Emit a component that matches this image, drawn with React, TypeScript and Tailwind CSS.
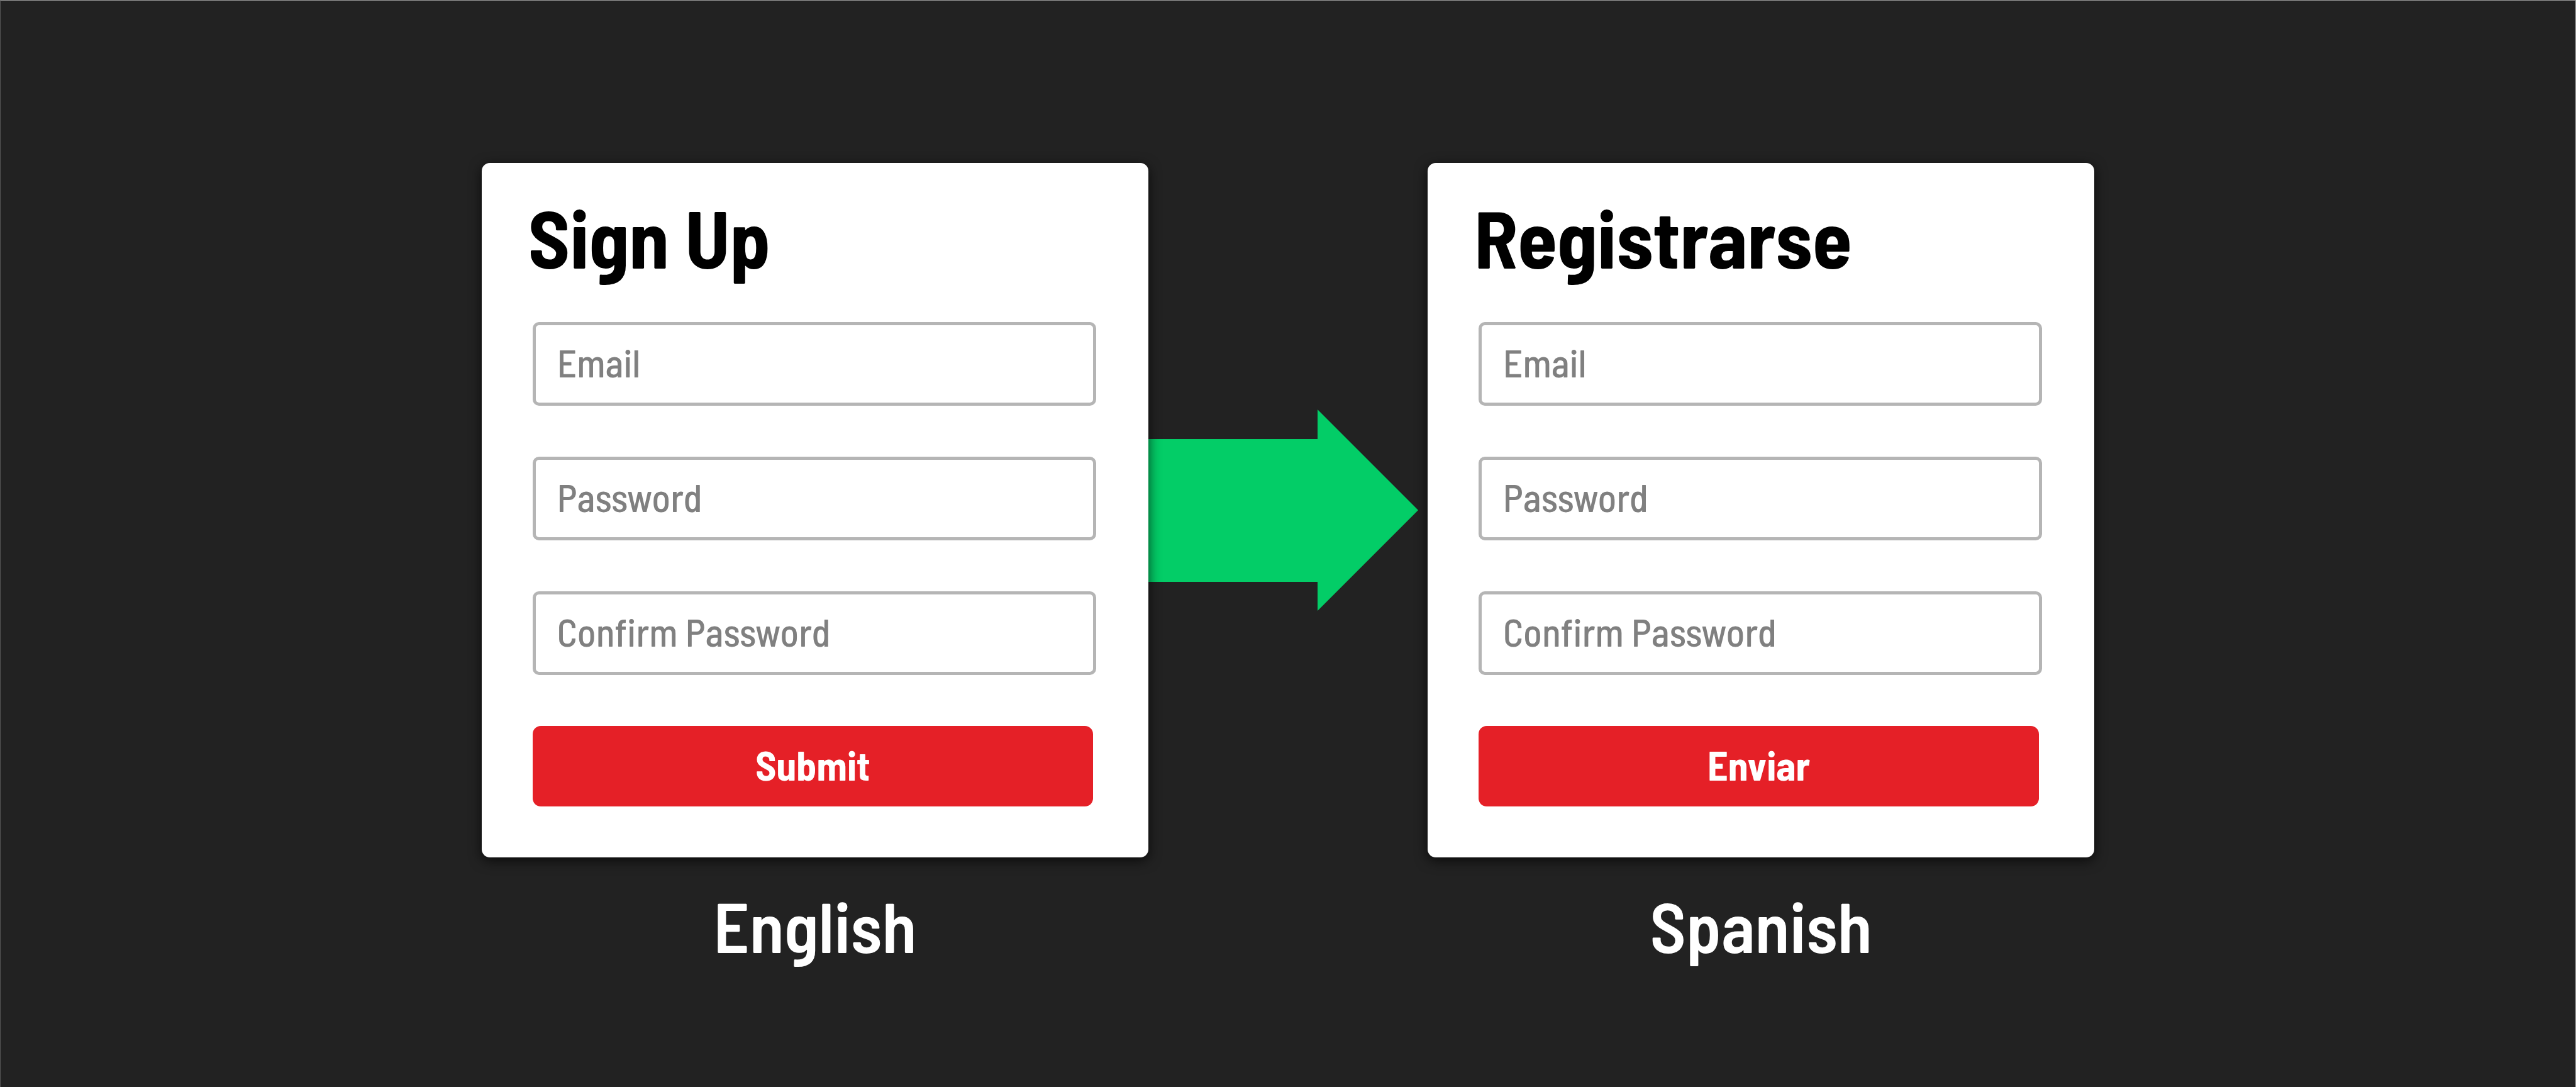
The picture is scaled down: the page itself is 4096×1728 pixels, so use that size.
type FormCopy = {
  id: string;
  lang: string;
  title: string;
  submit: string;
};

const english: FormCopy = { id: 'en', lang: 'en', title: 'Sign Up', submit: 'Submit' };
const spanish: FormCopy = { id: 'es', lang: 'es', title: 'Registrarse', submit: 'Enviar' };

const fields = [
  { name: 'email', type: 'email', label: 'Email' },
  { name: 'password', type: 'password', label: 'Password' },
  { name: 'confirm', type: 'password', label: 'Confirm Password' },
];

function SignUpCard({ id, lang, title, submit }: FormCopy) {
  return (
    <section
      lang={lang}
      aria-labelledby={`${id}-title`}
      className="relative z-10 rounded-[13px] bg-white pt-[53px] pb-[81px] shadow-[0_5px_20px_rgba(0,0,0,0.7)]"
    >
      <h2 id={`${id}-title`} className="px-[74px] text-[128px] leading-[128px] font-bold text-black">
        {title}
      </h2>
      <form className="mt-[72px] flex flex-col gap-[81px] pr-[83px] pl-[81px]" onSubmit={(e) => e.preventDefault()}>
        {fields.map((field) => (
          <input
            key={field.name}
            id={`${id}-${field.name}`}
            name={field.name}
            type={field.type}
            aria-label={field.label}
            placeholder={field.label}
            className="h-[133px] w-full rounded-[10px] border-[5px] border-[#b5b5b5] bg-white pr-8 pb-[6px] pl-[34px] text-[61px] font-medium text-[#808080] placeholder:text-[#808080] placeholder:opacity-100"
          />
        ))}
        <button
          type="submit"
          className="mr-[5px] flex h-32 items-center justify-center rounded-[13px] bg-[#e52027] pb-1 text-[64px] leading-[64px] font-bold text-white"
        >
          {submit}
        </button>
      </form>
    </section>
  );
}

function Arrow() {
  return (
    <svg viewBox="0 0 429 320" className="h-80 w-[429px] self-center" aria-hidden="true">
      <path d="M0 47H269V0L429 160L269 320V274H0Z" fill="#03cd67" />
    </svg>
  );
}

export default function App() {
  return (
    <main className="min-h-screen border-t border-r border-l border-t-[#999] border-r-[#aaa] border-l-[#555] bg-[#222] px-[18.67%] pt-[258px] pb-20 font-['Barlow_Semi_Condensed',Roboto,sans-serif]">
      <div className="grid grid-cols-[1fr_444px_1fr]">
        <SignUpCard {...english} />
        <Arrow />
        <SignUpCard {...spanish} />
        <p className="mt-[51px] text-center text-[112px] leading-[112px] font-semibold text-white">English</p>
        <p className="col-start-3 mt-[51px] text-center text-[112px] leading-[112px] font-semibold text-white">
          Spanish
        </p>
      </div>
    </main>
  );
}
